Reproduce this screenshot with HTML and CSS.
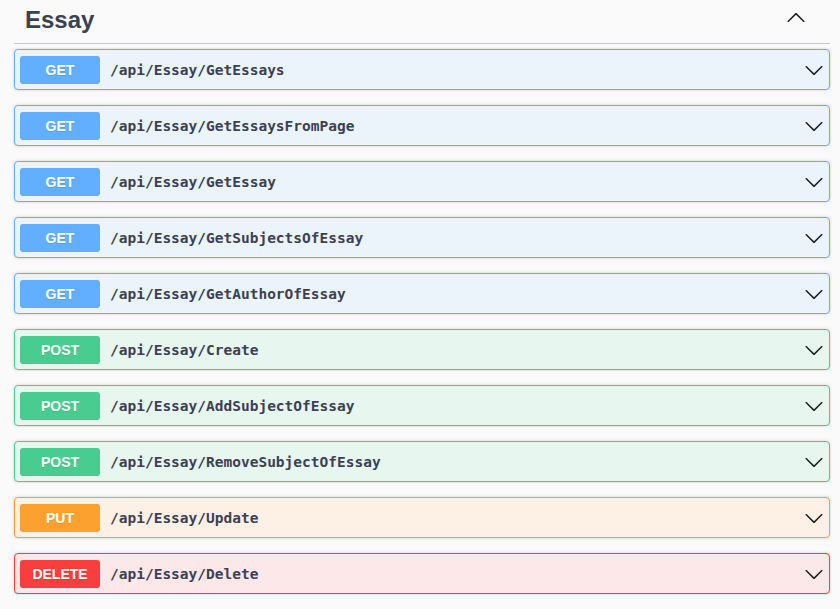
FILE: index.html
```html
<!DOCTYPE html>
<html>
<head>
<meta charset="utf-8">
<link rel="stylesheet" href="styles.css">
</head>
<body>
<div class="tag-section">
  <div class="tag-header">
    <h3 class="tag-title">Essay</h3>
    <svg class="arrow-up" width="20" height="20" viewBox="0 0 20 20"><path d="M17.418 6.109c.272-.268.709-.268.979 0s.271.701 0 .969l-7.908 7.83c-.27.268-.707.268-.979 0l-7.908-7.83c-.27-.268-.27-.701 0-.969.271-.268.709-.268.979 0L10 13.25l7.418-7.141z" transform="rotate(180 10 10)"/></svg>
  </div>
  <div class="op op-get"><span class="method">GET</span><span class="path">/api/Essay/GetEssays</span><svg class="arrow" width="20" height="20" viewBox="0 0 20 20"><path d="M17.418 6.109c.272-.268.709-.268.979 0s.271.701 0 .969l-7.908 7.83c-.27.268-.707.268-.979 0l-7.908-7.83c-.27-.268-.27-.701 0-.969.271-.268.709-.268.979 0L10 13.25l7.418-7.141z"/></svg></div>
  <div class="op op-get"><span class="method">GET</span><span class="path">/api/Essay/GetEssaysFromPage</span><svg class="arrow" width="20" height="20" viewBox="0 0 20 20"><path d="M17.418 6.109c.272-.268.709-.268.979 0s.271.701 0 .969l-7.908 7.83c-.27.268-.707.268-.979 0l-7.908-7.83c-.27-.268-.27-.701 0-.969.271-.268.709-.268.979 0L10 13.25l7.418-7.141z"/></svg></div>
  <div class="op op-get"><span class="method">GET</span><span class="path">/api/Essay/GetEssay</span><svg class="arrow" width="20" height="20" viewBox="0 0 20 20"><path d="M17.418 6.109c.272-.268.709-.268.979 0s.271.701 0 .969l-7.908 7.83c-.27.268-.707.268-.979 0l-7.908-7.83c-.27-.268-.27-.701 0-.969.271-.268.709-.268.979 0L10 13.25l7.418-7.141z"/></svg></div>
  <div class="op op-get"><span class="method">GET</span><span class="path">/api/Essay/GetSubjectsOfEssay</span><svg class="arrow" width="20" height="20" viewBox="0 0 20 20"><path d="M17.418 6.109c.272-.268.709-.268.979 0s.271.701 0 .969l-7.908 7.83c-.27.268-.707.268-.979 0l-7.908-7.83c-.27-.268-.27-.701 0-.969.271-.268.709-.268.979 0L10 13.25l7.418-7.141z"/></svg></div>
  <div class="op op-get"><span class="method">GET</span><span class="path">/api/Essay/GetAuthorOfEssay</span><svg class="arrow" width="20" height="20" viewBox="0 0 20 20"><path d="M17.418 6.109c.272-.268.709-.268.979 0s.271.701 0 .969l-7.908 7.83c-.27.268-.707.268-.979 0l-7.908-7.83c-.27-.268-.27-.701 0-.969.271-.268.709-.268.979 0L10 13.25l7.418-7.141z"/></svg></div>
  <div class="op op-post"><span class="method">POST</span><span class="path">/api/Essay/Create</span><svg class="arrow" width="20" height="20" viewBox="0 0 20 20"><path d="M17.418 6.109c.272-.268.709-.268.979 0s.271.701 0 .969l-7.908 7.83c-.27.268-.707.268-.979 0l-7.908-7.83c-.27-.268-.27-.701 0-.969.271-.268.709-.268.979 0L10 13.25l7.418-7.141z"/></svg></div>
  <div class="op op-post"><span class="method">POST</span><span class="path">/api/Essay/AddSubjectOfEssay</span><svg class="arrow" width="20" height="20" viewBox="0 0 20 20"><path d="M17.418 6.109c.272-.268.709-.268.979 0s.271.701 0 .969l-7.908 7.83c-.27.268-.707.268-.979 0l-7.908-7.83c-.27-.268-.27-.701 0-.969.271-.268.709-.268.979 0L10 13.25l7.418-7.141z"/></svg></div>
  <div class="op op-post"><span class="method">POST</span><span class="path">/api/Essay/RemoveSubjectOfEssay</span><svg class="arrow" width="20" height="20" viewBox="0 0 20 20"><path d="M17.418 6.109c.272-.268.709-.268.979 0s.271.701 0 .969l-7.908 7.83c-.27.268-.707.268-.979 0l-7.908-7.83c-.27-.268-.27-.701 0-.969.271-.268.709-.268.979 0L10 13.25l7.418-7.141z"/></svg></div>
  <div class="op op-put"><span class="method">PUT</span><span class="path">/api/Essay/Update</span><svg class="arrow" width="20" height="20" viewBox="0 0 20 20"><path d="M17.418 6.109c.272-.268.709-.268.979 0s.271.701 0 .969l-7.908 7.83c-.27.268-.707.268-.979 0l-7.908-7.83c-.27-.268-.27-.701 0-.969.271-.268.709-.268.979 0L10 13.25l7.418-7.141z"/></svg></div>
  <div class="op op-delete"><span class="method">DELETE</span><span class="path">/api/Essay/Delete</span><svg class="arrow" width="20" height="20" viewBox="0 0 20 20"><path d="M17.418 6.109c.272-.268.709-.268.979 0s.271.701 0 .969l-7.908 7.83c-.27.268-.707.268-.979 0l-7.908-7.83c-.27-.268-.27-.701 0-.969.271-.268.709-.268.979 0L10 13.25l7.418-7.141z"/></svg></div>
</div>
</body>
</html>
```
FILE: styles.css
```css
html, body {
  margin: 0;
  padding: 0;
  background: #fafafa;
}
body {
  font-family: "Liberation Sans", Arial, sans-serif;
  color: #3b4151;
}
.tag-section {
  width: 816px;
  margin-left: 14px;
}
.tag-header {
  display: flex;
  align-items: flex-start;
  justify-content: space-between;
  height: 44px;
  box-sizing: border-box;
  border-bottom: 1px solid #c4c6cb;
  padding: 0 24px 0 11px;
  margin-bottom: 5px;
}
.tag-title {
  margin: 0;
  font-size: 24px;
  font-weight: bold;
  line-height: 39px;
  color: #3b4151;
}
.arrow-up {
  margin-top: 8px;
  fill: #1b1b1b;
}
.op {
  display: flex;
  align-items: center;
  height: 41px;
  box-sizing: border-box;
  padding: 0 5px;
  border: 1px solid;
  border-radius: 4px;
  box-shadow: 0 0 3px rgba(0,0,0,0.19);
  margin-bottom: 15px;
}
.method {
  width: 80px;
  height: 28px;
  line-height: 28px;
  border-radius: 3px;
  text-align: center;
  color: #fff;
  font-size: 14px;
  font-weight: bold;
  text-shadow: 0 1px 0 rgba(0,0,0,0.1);
  flex: none;
}
.path {
  flex: 1;
  padding: 0 10px;
  font-family: "DejaVu Sans Mono", monospace;
  font-weight: bold;
  font-size: 14.5px;
  color: #3b4151;
}
.arrow {
  flex: none;
  fill: #1b1b1b;
}
.op-get { border-color: #61affe; background: #ebf3fb; }
.op-get .method { background: #61affe; }
.op-post { border-color: #49cc90; background: #e8f6f0; }
.op-post .method { background: #49cc90; }
.op-put { border-color: #fca130; background: #fdf1e5; }
.op-put .method { background: #fca130; }
.op-delete { border-color: #f93e3e; background: #fce8e8; }
.op-delete .method { background: #f93e3e; }
```
